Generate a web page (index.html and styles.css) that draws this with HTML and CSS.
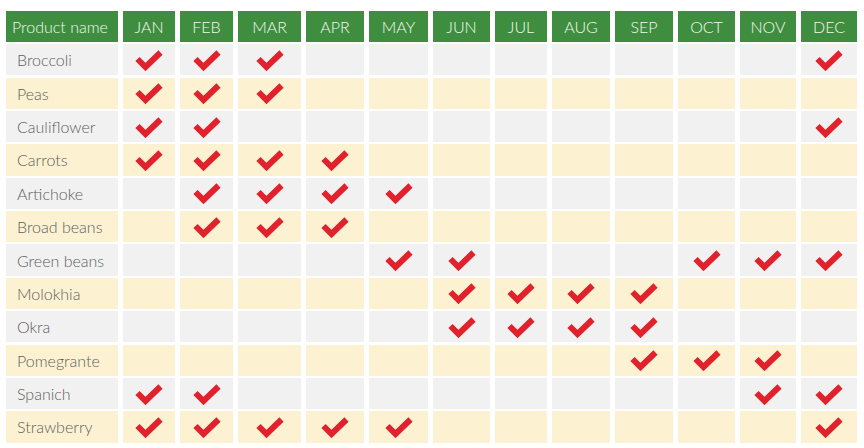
FILE: index.html
```html
<!DOCTYPE html>
<html>
<head>
<meta charset="utf-8">
<link rel="stylesheet" href="styles.css">
</head>
<body>
<svg width="0" height="0" class="defs">
  <symbol id="chk" viewBox="0 0 28 22">
    <polyline points="2.5,10 10.5,18 25.5,3.5" fill="none" stroke="#e1212b" stroke-width="6" stroke-linejoin="miter" stroke-linecap="butt"/>
  </symbol>
</svg>
<div class="grid">
  <div class="h name">Product name</div>
  <div class="h">JAN</div><div class="h">FEB</div><div class="h">MAR</div><div class="h">APR</div><div class="h">MAY</div><div class="h">JUN</div><div class="h">JUL</div><div class="h">AUG</div><div class="h">SEP</div><div class="h">OCT</div><div class="h">NOV</div><div class="h">DEC</div>
</div>
<script>
const data = [
 ["Broccoli",[1,2,3,12]],
 ["Peas",[1,2,3]],
 ["Cauliflower",[1,2,12]],
 ["Carrots",[1,2,3,4]],
 ["Artichoke",[2,3,4,5]],
 ["Broad beans",[2,3,4]],
 ["Green beans",[5,6,10,11,12]],
 ["Molokhia",[6,7,8,9]],
 ["Okra",[6,7,8,9]],
 ["Pomegrante",[9,10,11]],
 ["Spanich",[1,2,11,12]],
 ["Strawberry",[1,2,3,4,5,12]]
];
const g = document.querySelector('.grid');
data.forEach((r,i)=>{
  const cls = i%2===0 ? 'g' : 'y';
  const n = document.createElement('div');
  n.className = 'c name ' + cls;
  n.textContent = r[0];
  g.appendChild(n);
  for(let m=1;m<=12;m++){
    const c = document.createElement('div');
    c.className = 'c ' + cls;
    if(r[1].includes(m)) c.innerHTML = '<svg class="ck" width="28" height="22"><use href="#chk"/></svg>';
    g.appendChild(c);
  }
});
</script>
</body>
</html>
```
FILE: styles.css
```css
html, body { margin: 0; background: #fff; }
body { padding: 11px 0 0 6px; font-family: "Lato", "Open Sans", sans-serif; }
.defs { position: absolute; }
.grid {
  display: grid;
  grid-template-columns: 112px 52px 53px 63px 58px 59px 57px 52px 58px 58px 57px 56px 56px;
  grid-template-rows: 31px;
  grid-auto-rows: 31.2px;
  column-gap: 5px;
  row-gap: 2.2px;
}
.h {
  background: #3f8e3f;
  color: #f4f8f2;
  font-size: 16px;
  font-weight: 300;
  display: flex;
  align-items: center;
  justify-content: center;
}
.h.name { justify-content: flex-start; padding-left: 6px; }
.c { display: flex; align-items: center; justify-content: center; }
.c.name { justify-content: flex-start; padding-left: 11px; color: #5e5e5e; font-size: 16px; font-weight: 300; }
.g { background: #f1f1f1; }
.y { background: #fcf2d2; }
.ck { display: block; }
```
